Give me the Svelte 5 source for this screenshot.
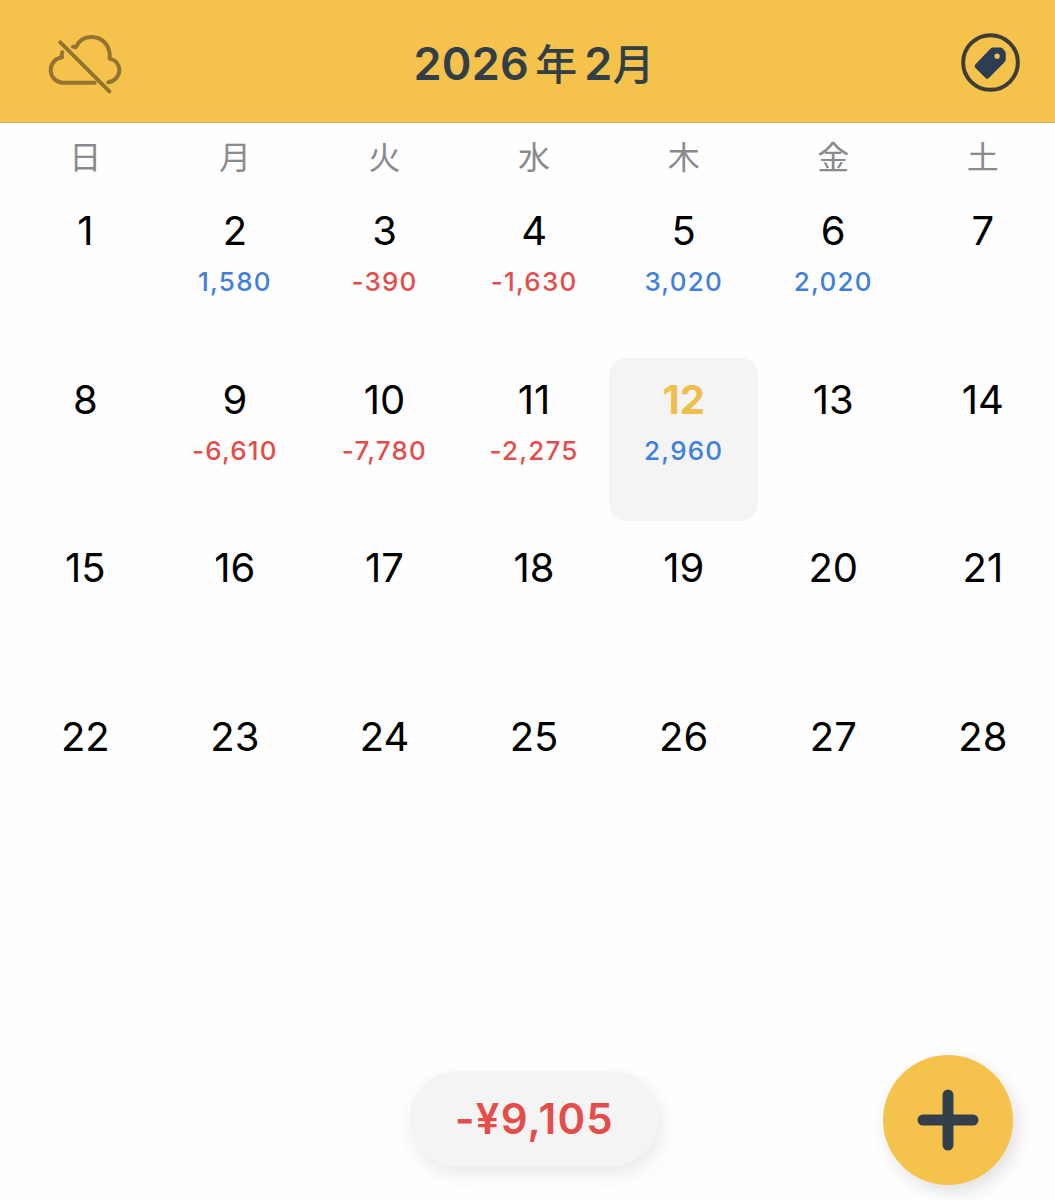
<script lang="ts">
  const weekdays = ['日', '月', '火', '水', '木', '金', '土'];

  const amounts: Record<number, number> = {
    2: 1580,
    3: -390,
    4: -1630,
    5: 3020,
    6: 2020,
    9: -6610,
    10: -7780,
    11: -2275,
    12: 2960,
  };

  const days = Array.from({ length: 28 }, (_, i) => i + 1);

  let selected = $state(12);

  const total = $derived(Object.values(amounts).reduce((sum, n) => sum + n, 0));

  function format(n: number) {
    return n.toLocaleString('en-US');
  }
</script>

<div class="app">
  <header class="header">
    <button class="icon-button" aria-label="同期オフ">
      <svg class="cloud" viewBox="54 42 222 180">
        <path d="M194 188H102C78 188 62 171 62 150C62 130 76 115 96 112Q94 104 97 97" />
        <path d="M129 80L137 82C146 63 163 51 184 51C216 51 243 76 239 116C257 120 268 134 268 151C268 169 254 184 235 187" />
        <path d="M91 67L238 214" />
      </svg>
    </button>
    <h1 class="title">2026<span class="unit year">年</span>2<span class="unit">月</span></h1>
    <button class="icon-button" aria-label="タグ">
      <svg class="tag" viewBox="62 52 178 178">
        <circle cx="151" cy="141" r="82.5" />
        <path
          fill-rule="evenodd"
          d="M152 98Q155 96 159 96H180Q185 96 188 99L194 106Q197 109 197 113V131Q197 136 193 140L146 188Q141 193 136 188L105 157Q101 152 105 147ZM171 114a8 8 0 1 0 0 16a8 8 0 1 0 0-16Z"
        />
      </svg>
    </button>
  </header>

  <div class="weekdays">
    {#each weekdays as weekday}
      <span>{weekday}</span>
    {/each}
  </div>

  <div class="days">
    {#each days as day}
      <button class="day" class:selected={day === selected} onclick={() => (selected = day)}>
        <span class="number">{day}</span>
        {#if amounts[day] !== undefined}
          <span class="amount" class:negative={amounts[day] < 0}>{format(amounts[day])}</span>
        {/if}
      </button>
    {/each}
  </div>

  <footer class="footer">
    <div class="total" class:negative={total < 0}>
      {total < 0 ? '-' : ''}¥{format(Math.abs(total))}
    </div>
    <button class="add" aria-label="追加">
      <svg viewBox="0 0 62 62">
        <path d="M31 6V56M6 31H56" />
      </svg>
    </button>
  </footer>
</div>

<style>
  :global(body) {
    margin: 0;
    background: #fefefe;
  }

  button {
    padding: 0;
    border: none;
    background: none;
    font: inherit;
    color: inherit;
    cursor: pointer;
  }

  svg {
    display: block;
  }

  .app {
    display: flex;
    flex-direction: column;
    height: 1200px;
    overflow: hidden;
    font-family: Inter, 'Noto Sans CJK JP', sans-serif;
    color: #000;
  }

  .header {
    display: grid;
    grid-template-columns: 75px 1fr 75px;
    align-items: center;
    box-sizing: border-box;
    height: 123px;
    padding: 2px 35px 0 48px;
    background: #f5c24c;
    border-bottom: 1px solid #d3ab55;
  }

  .icon-button:last-child {
    justify-self: end;
  }

  .cloud {
    width: 74px;
    height: 60px;
    margin-top: 4px;
    fill: none;
    stroke: #92732f;
    stroke-width: 12;
    stroke-linecap: round;
    stroke-linejoin: round;
  }

  .tag {
    width: 59px;
    height: 59px;
  }

  .tag circle {
    fill: none;
    stroke: #3c3c38;
    stroke-width: 12;
  }

  .tag path {
    fill: #2d3d54;
  }

  .title {
    display: flex;
    align-items: center;
    justify-content: center;
    margin: 4px 0 0;
    font-size: 45px;
    font-weight: 600;
    line-height: 60px;
    letter-spacing: 0.3px;
    color: #333f48;
  }

  .unit {
    margin-bottom: 4px;
    font-family: 'Noto Sans CJK JP', sans-serif;
    font-size: 42px;
    font-weight: 500;
    letter-spacing: 0;
  }

  .year {
    margin-right: 7px;
    margin-left: 6px;
  }

  .weekdays,
  .days {
    display: grid;
    grid-template-columns: repeat(7, 149.6px);
    margin-left: 10.5px;
  }

  .weekdays {
    height: 66.5px;
    line-height: 64px;
    font-family: 'Noto Sans CJK JP', sans-serif;
    font-size: 32px;
    font-weight: 400;
    text-align: center;
    color: #8a8a8e;
  }

  .days {
    grid-auto-rows: 163px;
    row-gap: 5.5px;
  }

  .day {
    display: flex;
    flex-direction: column;
    align-items: center;
    box-sizing: border-box;
    padding-top: 16.5px;
    border-radius: 17px;
  }

  .number {
    font-size: 40px;
    line-height: 50px;
  }

  .amount {
    margin-top: 9px;
    font-size: 26px;
    font-weight: 500;
    line-height: 34px;
    letter-spacing: 1.2px;
    color: #3f80df;
  }

  .amount.negative,
  .total.negative {
    color: #e44d4a;
  }

  .day.selected {
    background: #f4f4f4;
  }

  .selected .number {
    font-weight: 700;
    color: #f0be4d;
  }

  .footer {
    display: grid;
    grid-template-columns: 1fr 249px 1fr;
    align-items: center;
    height: 130px;
    margin-top: auto;
    padding: 0 42px 15px 56px;
  }

  .total {
    grid-column: 2;
    height: 95px;
    margin-bottom: 4px;
    border-radius: 48px;
    background: #f4f4f4;
    box-shadow: 3px 8px 20px rgba(0, 0, 0, 0.09);
    font-size: 42px;
    font-weight: 600;
    line-height: 95px;
    letter-spacing: 1.2px;
    text-align: center;
    color: #3f80df;
  }

  .add {
    justify-self: end;
    display: grid;
    place-items: center;
    width: 130px;
    height: 130px;
    border-radius: 50%;
    background: #f5c24c;
    box-shadow: 5px 7px 18px rgba(0, 0, 0, 0.12);
  }

  .add svg {
    width: 62px;
    height: 62px;
    fill: none;
    stroke: #343f4c;
    stroke-width: 11;
    stroke-linecap: round;
  }
</style>
